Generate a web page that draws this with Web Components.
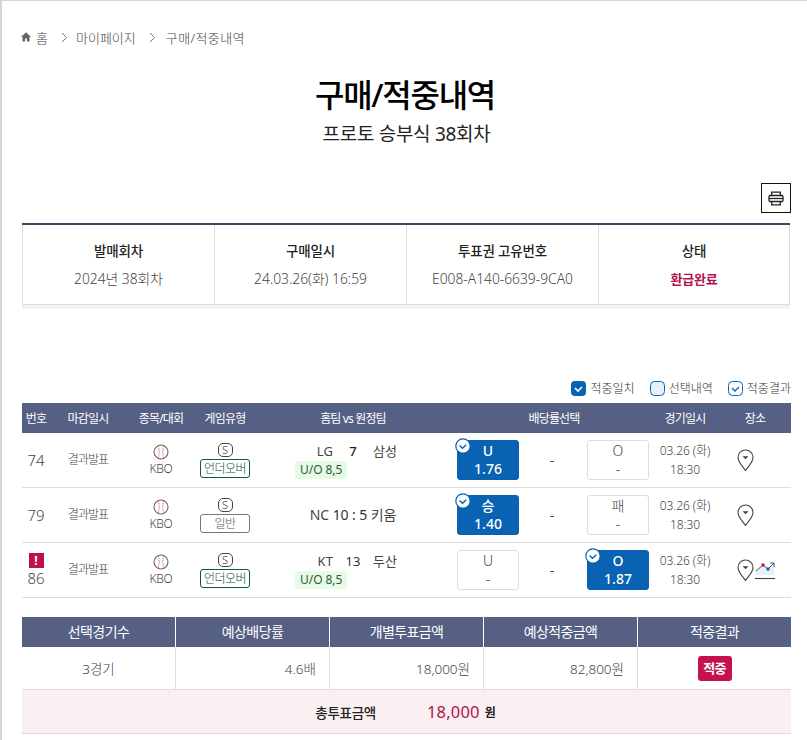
<!DOCTYPE html>
<html lang="ko"><head><meta charset="utf-8"><title>구매/적중내역</title>
<style>
html,body{margin:0;padding:0;background:#fff}
body{font-family:"Noto Sans","Noto Sans CJK KR",sans-serif;color:#555}
</style></head><body>
<x-page>
  <x-breadcrumb></x-breadcrumb>
  <x-title heading="구매/적중내역" sub="프로토 승부식 38회차"></x-title>
  <x-print></x-print>
  <x-info></x-info>
  <x-legend></x-legend>
  <x-games>
    <x-game no="74" home="LG" score="7" away="삼성" type="언더오버" line="U/O 8,5" a="U" ao="1.76" b="O" bo="-" pick="a" strong></x-game>
    <x-game no="79" home="NC" score="10 : 5" away="키움" type="일반" a="승" ao="1.40" b="패" bo="-" pick="a" inline></x-game>
    <x-game no="86" home="KT" score="13" away="두산" type="언더오버" line="U/O 8,5" a="U" ao="-" b="O" bo="1.87" pick="b" warn chart></x-game>
  </x-games>
  <x-summary></x-summary>
</x-page>
<script>
const CJK='"Noto Sans","Noto Sans CJK KR",sans-serif';
function def(name,css,html){
  customElements.define(name,class extends HTMLElement{
    connectedCallback(){
      if(this.shadowRoot)return;
      const r=this.attachShadow({mode:'open'});
      r.innerHTML='<style>'+css+'</style>'+(typeof html==='function'?html(this):html);
    }
  });
}
def('x-page',`:host{display:block;box-sizing:border-box;width:807px;height:740px;overflow:hidden;border-top:1px solid #d3d6da;border-left:2px solid #d3d6da;padding:0 16px 0 20px;font-family:${CJK}}`,'<slot></slot>');

def('x-breadcrumb',`:host{display:flex;align-items:center;height:20px;margin-top:26px;font-size:13px;font-weight:300;color:#444}
svg{display:block}.home{margin:0 4px 0 -2px}
.sep{margin:0 8px 0 13px}.sep.b{margin-right:10px}.last{letter-spacing:.4px}`,
`<svg class="home" width="12" height="12" viewBox="0 0 12 12"><path d="M6 1.2 1 6h1.5v4.6h2.6V7.6h1.8v3h2.6V6H11z" fill="#666"/></svg><span>홈</span>
<svg class="sep" width="7" height="11" viewBox="0 0 7 11"><path d="M1 1l4.5 4.5L1 10" fill="none" stroke="#777" stroke-width="1"/></svg><span>마이페이지</span>
<svg class="sep b" width="7" height="11" viewBox="0 0 7 11"><path d="M1 1l4.5 4.5L1 10" fill="none" stroke="#777" stroke-width="1"/></svg><span class="last">구매/적중내역</span>`);

def('x-title',`:host{display:block;text-align:center;margin-top:28px;color:#111}
h1{margin:0;padding-right:3px;font-size:32px;line-height:40px;font-weight:500;letter-spacing:-1.3px;color:#000}
p{margin:6px 0 0;font-size:19px;line-height:26px;letter-spacing:-.3px;color:#222}`,
e=>`<h1>${e.getAttribute('heading')}</h1><p>${e.getAttribute('sub')}</p>`);

def('x-print',`:host{display:flex;justify-content:flex-end;margin-top:36px}
button{box-sizing:border-box;width:30px;height:30px;border:1px solid #111;background:#fff;padding:0;display:flex;align-items:center;justify-content:center}`,
`<button aria-label="인쇄"><svg width="16" height="15" viewBox="0 0 16 15" fill="none" stroke="#222" stroke-width="1.3"><path d="M3.7 4.5V1.2h8.6v3.3"/><rect x="1" y="4.5" width="14" height="6" rx="1.2"/><path d="M1 7.5h14"/><path d="M3.7 10.5v3.3h8.6v-3.3"/></svg></button>`);

def('x-info',`:host{display:grid;grid-template-columns:repeat(4,192px);box-sizing:border-box;width:768px;height:86px;margin-top:10px;border-top:2px solid #3d4560;border-bottom:4px solid #f4f4f4;text-align:center}
div{border-bottom:1px solid #dcdcdc;border-left:1px solid #dcdcdc;height:80px;padding-top:16px;box-sizing:border-box}
div:last-child{border-right:1px solid #dcdcdc}
b{display:block;font-size:13.5px;line-height:20px;font-weight:500;color:#222;letter-spacing:-.2px}
span{display:block;font-size:13.8px;font-weight:300;line-height:20px;margin-top:8px;color:#444}
span.r{color:#b0124f;font-weight:700;font-size:13px;letter-spacing:-.25px}`,
`<div><b>발매회차</b><span>2024년 38회차</span></div><div><b>구매일시</b><span>24.03.26(화) 16:59</span></div><div><b>투표권 고유번호</b><span>E008-A140-6639-9CA0</span></div><div><b>상태</b><span class="r">환급완료</span></div>`);

def('x-legend',`:host{display:flex;justify-content:flex-end;align-items:center;height:16px;margin-top:71px;font-size:12px;font-weight:300;color:#333;letter-spacing:0}
span{margin:0 15px 0 4px}span:last-child{margin-right:0}svg{display:block}`,
`<svg width="15" height="15" viewBox="0 0 15 15"><rect width="15" height="15" rx="4" fill="#0a62b3"/><path d="M4 7l3 3 4-4" fill="none" stroke="#fff" stroke-width="1.6"/></svg><span>적중일치</span>
<svg width="15" height="15" viewBox="0 0 15 15"><rect x=".5" y=".5" width="14" height="14" rx="4" fill="#e6f0fa" stroke="#0a62b3"/></svg><span>선택내역</span>
<svg width="15" height="15" viewBox="0 0 15 15"><rect x=".5" y=".5" width="14" height="14" rx="4" fill="#fff" stroke="#0a62b3"/><path d="M4 7l3 3 4-4" fill="none" stroke="#0a62b3" stroke-width="1.3"/></svg><span>적중결과</span>`);

const COLS='28px 76px 70px 58px 198px 72px 56px 76px 58px 1fr';
def('x-games',`:host{display:block;margin-top:7px}
.h{display:grid;grid-template-columns:${COLS};height:30px;align-items:center;background:#566085;color:#fff;font-size:12px;text-align:center;letter-spacing:-.85px}
.h span{white-space:nowrap}.o{grid-column:6/9}.p{padding-left:5px}`,
`<div class="h"><span>번호</span><span>마감일시</span><span>종목/대회</span><span>게임유형</span><span>홈팀 vs 원정팀</span><span class="o">배당률선택</span><span>경기일시</span><span class="p">장소</span></div><slot></slot>`);

const ball=`<svg width="16" height="16" viewBox="0 0 16 16" fill="none"><circle cx="8" cy="8" r="7" stroke="#666" stroke-width="1.1"/><path d="M5 2c1.6 3.6 1.6 8.4 0 12M11 2c-1.6 3.6-1.6 8.4 0 12" stroke="#d88" stroke-width="1.1" stroke-dasharray="1.4 .7"/></svg>`;
const pin=`<svg width="17" height="23" viewBox="0 0 17 23" fill="none"><path d="M8.5 21.5C6 17.5 1 13.5 1 8.5a7.5 7.5 0 0 1 15 0c0 5-5 9-7.5 13z" stroke="#444" stroke-width="1.1"/><path d="M5.5 7.2h6L8.5 10.3z" fill="#444"/></svg>`;
const chart=`<svg width="20" height="20" viewBox="0 0 20 20" fill="none"><path d="M1 11l7-6 5 4 6-6v12H1z" fill="#e6f0fa"/><path d="M1 11l7-6 5 4 6-6M15 3h4v4" stroke="#444" stroke-width=".9"/><rect x="6.5" y="3.5" width="3" height="3" fill="#b0124f"/><rect x="11.5" y="7.5" width="3" height="3" fill="#0a62b3"/><path d="M0 18.5h20" stroke="#444" stroke-width="1.1"/></svg>`;
const odds=(l,v,on)=>on
 ?`<div class="odd on"><svg class="ck" width="16" height="16" viewBox="0 0 16 16"><circle cx="8" cy="8" r="7.2" fill="#fff" stroke="#0a62b3" stroke-width="1.2"/><path d="M4.5 7.5l3 2.8 3.8-3.6" fill="none" stroke="#0a62b3" stroke-width="1.4"/></svg><span>${l}</span><span>${v}</span></div>`
 :`<div class="odd"><span>${l}</span><span>${v}</span></div>`;
def('x-game',`:host{display:grid;grid-template-columns:${COLS};height:55px;box-sizing:border-box;border-bottom:1px solid #ddd;align-items:center;text-align:center;color:#444;font-weight:300}
.no{font-size:15px;line-height:18px;display:flex;flex-direction:column;align-items:center}
.warn{width:15px;height:15px;background:#c01048;color:#fff;font-size:12px;font-weight:700;font-style:normal;line-height:15px;display:block;margin-bottom:1px}
.st{font-size:12px;letter-spacing:-.95px;margin-top:-2px}
.lg{display:flex;flex-direction:column;align-items:center;font-size:12px;letter-spacing:-.3px;line-height:14px;gap:2px}
.ty{display:flex;flex-direction:column;align-items:center;gap:2px}
.s{box-sizing:border-box;width:15px;height:14px;border:1px solid #444;border-radius:5px;font-size:11px;line-height:12px;color:#333}
.bd{box-sizing:border-box;width:50px;height:19px;border:1px solid #777;border-radius:3px;font-size:12px;line-height:17px;letter-spacing:-.5px;color:#555}
.bd.g{border-color:#0c5a3a;color:#1e4d38}
.te{display:flex;flex-direction:column;padding:0 41px;font-size:13px;color:#444;line-height:18px}
.tl{display:grid;grid-template-columns:1fr 40px 1fr;letter-spacing:.1px;font-weight:400}.tl b{font-weight:400;color:#333}.tl b.k{font-weight:500;color:#222}.tl span:first-child{text-align:right}.tl span:last-child{text-align:left}
.one{font-size:14px;letter-spacing:-.1px;white-space:nowrap;font-weight:400}.one b{font-weight:400;color:#333}
.tag{align-self:flex-start;font-size:12px;font-weight:400;line-height:18px;height:18px;background:#e6fae6;color:#2c5c3c;padding:0 5px;border-radius:3px;margin-top:1px;letter-spacing:-.05px}
.odd{box-sizing:border-box;position:relative;width:62px;height:40px;margin:0 auto;border:1px solid #ddd;border-radius:3px;display:flex;flex-direction:column;justify-content:center;font-size:14px;line-height:18px;color:#444;background:#fff}
.odd.on{background:#0a62b3;border-color:#0a62b3;color:#fff;font-weight:500}
.ck{position:absolute;left:-3px;top:-3px}
.dash{font-size:13px;color:#333;font-weight:400}
.dt{font-size:12px;line-height:19px;color:#444;letter-spacing:-.1px}
.pl{display:flex;align-items:center;padding-left:23px;gap:1px}svg{display:block}`,
e=>{const g=a=>e.getAttribute(a),pa=g('pick')==='a';
 const team=e.hasAttribute('inline')
  ?`<div class="one">${g('home')} <b>${g('score')}</b> ${g('away')}</div>`
  :`<div class="tl"><span>${g('home')}</span><b class="${e.hasAttribute('strong')?'k':''}">${g('score')}</b><span>${g('away')}</span></div>`+(g('line')?`<div class="tag">${g('line')}</div>`:'');
 return `<div class="no">${e.hasAttribute('warn')?'<i class="warn">!</i>':''}${g('no')}</div>
 <div class="st">결과발표</div>
 <div class="lg">${ball}<span>KBO</span></div>
 <div class="ty"><div class="s">S</div><div class="bd ${g('line')?'g':''}">${g('type')}</div></div>
 <div class="te">${team}</div>
 <div>${odds(g('a'),g('ao'),pa)}</div><div class="dash">-</div><div>${odds(g('b'),g('bo'),!pa)}</div>
 <div class="dt">03.26 (화)<br>18:30</div>
 <div class="pl">${pin}${e.hasAttribute('chart')?chart:''}</div>`});

def('x-summary',`:host{display:grid;grid-template-columns:153px repeat(4,154px);margin-top:19px;font-size:13.5px}
.h{background:#566085;color:#fff;height:30px;line-height:30px;text-align:center;border-left:1px solid #fff;letter-spacing:-.6px;font-size:14px;box-sizing:border-box}.h.f{border-left:0}
.c{height:43px;box-sizing:border-box;border-left:1px solid #ddd;border-bottom:1px solid #ddd;padding:0 13px;font-weight:300;color:#444;display:flex;align-items:center;justify-content:flex-end}
.c.f{border-left:0}.c.m{justify-content:center}
.c i{font-style:normal;background:#c6114f;color:#fff;font-weight:700;font-size:13px;width:34px;height:25px;line-height:24px;border-radius:3px;text-align:center;letter-spacing:-.6px}
.t{grid-column:1/6;height:44px;box-sizing:border-box;padding-right:2px;background:#fbf0f1;border-bottom:1px solid #ddd;display:flex;align-items:center;justify-content:center;color:#222}
.t b{font-weight:500;font-size:13.5px;letter-spacing:-.3px}.t em{font-style:normal;color:#b0124f;font-size:16.5px;margin-left:51px;letter-spacing:.2px}.t u{text-decoration:none;font-weight:700;font-size:12px;margin-left:5px}`,
`<div class="h f">선택경기수</div><div class="h">예상배당률</div><div class="h">개별투표금액</div><div class="h">예상적중금액</div><div class="h">적중결과</div>
<div class="c f m">3경기</div><div class="c">4.6배</div><div class="c">18,000원</div><div class="c">82,800원</div><div class="c m"><i>적중</i></div>
<div class="t"><b>총투표금액</b><em>18,000</em><u>원</u></div>`);
</script>
</body></html>
